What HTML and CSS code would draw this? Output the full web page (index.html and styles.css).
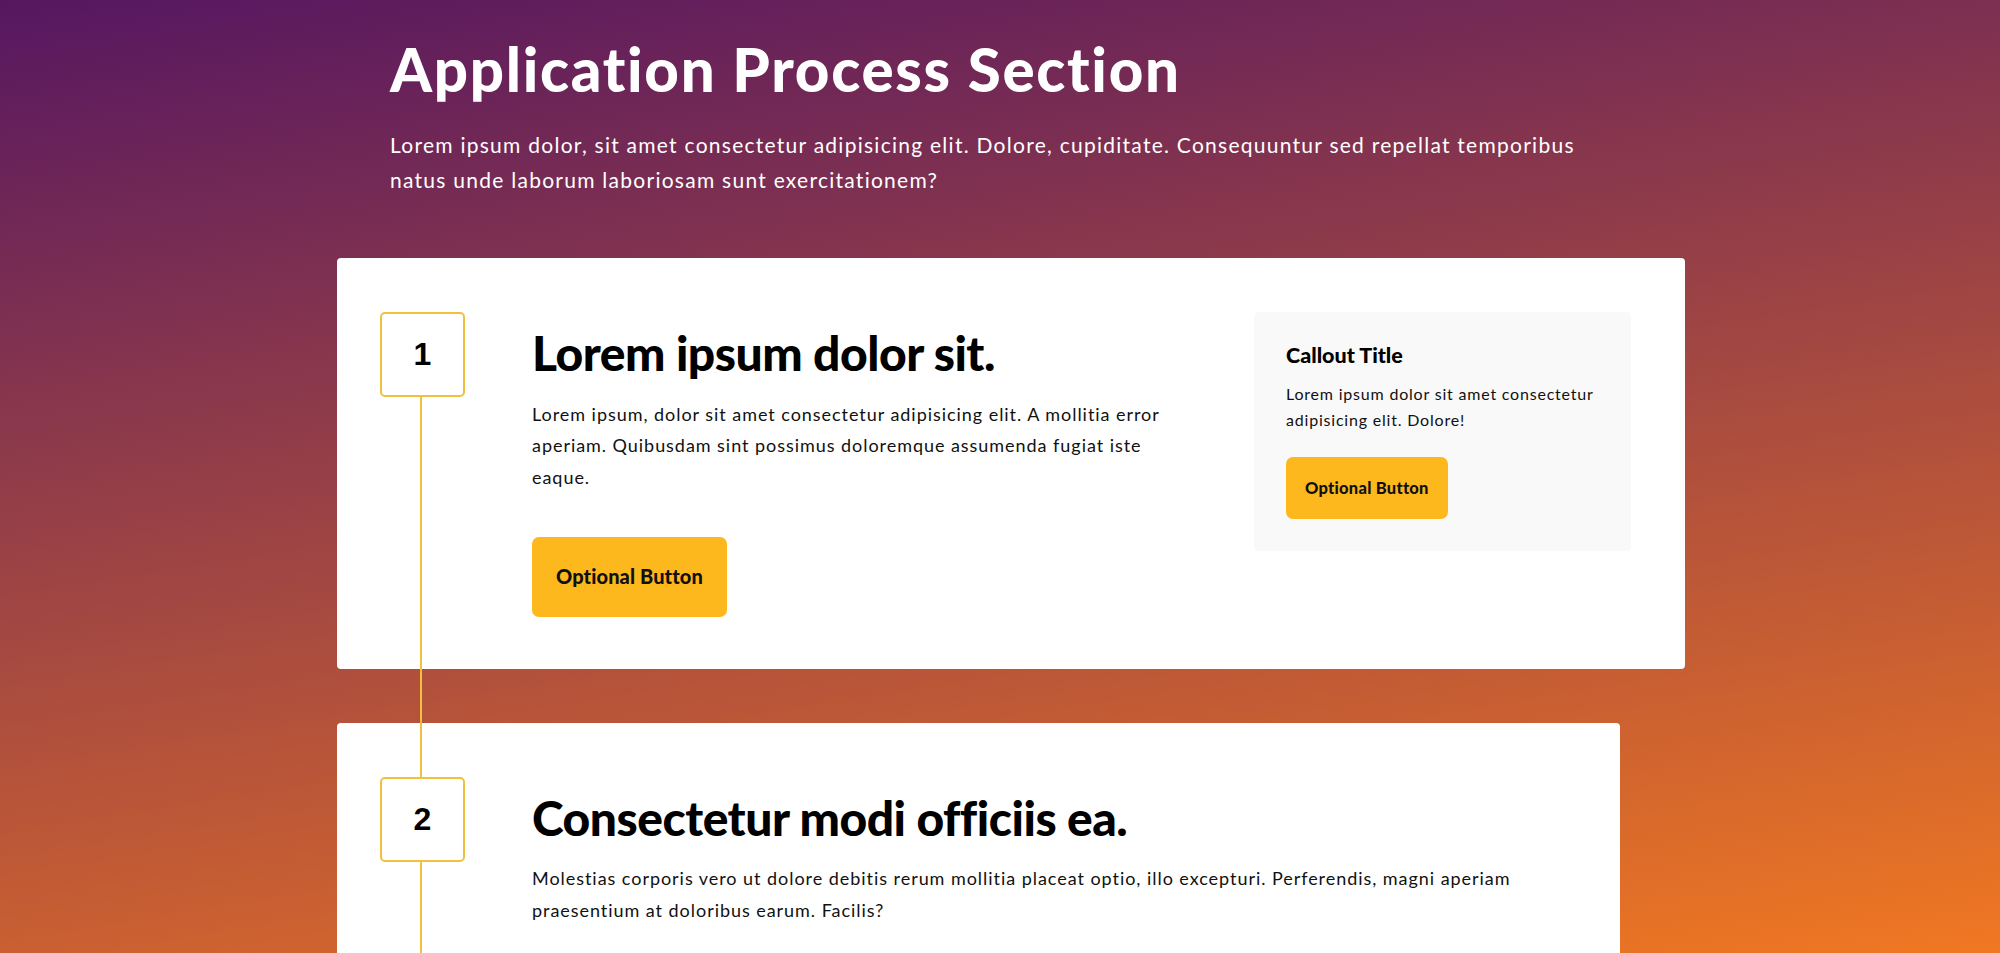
FILE: index.html
```html
<!DOCTYPE html>
<html lang="en">
<head>
<meta charset="utf-8">
<title>Application Process Section</title>
<link rel="stylesheet" href="styles.css">
</head>
<body>
<main class="section">
  <header class="intro">
    <h1 class="intro-title">Application Process Section</h1>
    <p class="intro-text">Lorem ipsum dolor, sit amet consectetur adipisicing elit. Dolore, cupiditate. Consequuntur sed repellat temporibus natus unde laborum laboriosam sunt exercitationem?</p>
  </header>

  <div class="timeline">
    <article class="step step-wide">
      <div class="step-num">1</div>
      <div class="step-body">
        <h2 class="step-title">Lorem ipsum dolor sit.</h2>
        <p class="step-text">Lorem ipsum, dolor sit amet consectetur adipisicing elit. A mollitia error aperiam. Quibusdam sint possimus doloremque assumenda fugiat iste eaque.</p>
        <a class="btn" href="#">Optional Button</a>
      </div>
      <aside class="callout">
        <h3 class="callout-title">Callout Title</h3>
        <p class="callout-text">Lorem ipsum dolor sit amet consectetur adipisicing elit. Dolore!</p>
        <a class="btn btn-small" href="#">Optional Button</a>
      </aside>
    </article>

    <article class="step step-narrow">
      <div class="step-num">2</div>
      <div class="step-body">
        <h2 class="step-title">Consectetur modi officiis ea.</h2>
        <p class="step-text">Molestias corporis vero ut dolore debitis rerum mollitia placeat optio, illo excepturi. Perferendis, magni aperiam praesentium at doloribus earum. Facilis?</p>
      </div>
    </article>
  </div>
</main>
</body>
</html>
```

FILE: styles.css
```css
html {
  background: linear-gradient(171deg, #561761 0%, #f07822 100%) fixed;
  min-height: 100%;
}

body {
  margin: 0;
  font-family: Lato, "Open Sans", sans-serif;
  color: #111;
}

.section {
  padding: 33px 0 80px 337px;
}

.intro {
  padding-left: 53px;
  max-width: 1230px;
}

.intro-title {
  margin: 0;
  font-size: 60px;
  line-height: 72px;
  font-weight: 900;
  letter-spacing: 1.7px;
  color: #fff;
}

.intro-text {
  margin: 22px 0 0;
  font-size: 21px;
  line-height: 35px;
  letter-spacing: 0.06em;
  color: #fff;
}

.timeline {
  position: relative;
  margin-top: 61px;
  display: flex;
  flex-direction: column;
  gap: 54px;
}

.timeline::before {
  content: "";
  position: absolute;
  left: 83px;
  top: 96px;
  bottom: 0;
  width: 2px;
  background: #f3bf3f;
  z-index: 1;
}

.step {
  display: flex;
  align-items: flex-start;
  background: #fff;
  border-radius: 4px;
  padding: 54px 54px 52px 43px;
  box-sizing: border-box;
}

.step-wide {
  width: 1348px;
}

.step-narrow {
  width: 1283px;
}

.step-num {
  position: relative;
  z-index: 2;
  flex: 0 0 auto;
  width: 85px;
  height: 85px;
  box-sizing: border-box;
  border: 2px solid #f3bf3f;
  border-radius: 5px;
  background: #fff;
  display: flex;
  align-items: center;
  justify-content: center;
  font-family: "Liberation Sans", Arial, sans-serif;
  font-weight: 700;
  font-size: 32px;
  color: #000;
}

.step-body {
  flex: 1 1 auto;
  margin-left: 67px;
}

.step-wide .step-body {
  max-width: 640px;
}

.step-title {
  margin: 12px 0 0;
  font-size: 48px;
  line-height: 57.6px;
  font-weight: 900;
  letter-spacing: -0.5px;
  color: #000;
}

.step-text {
  margin: 17px 0 0;
  font-size: 18px;
  line-height: 31.5px;
  letter-spacing: 0.053em;
  color: #111;
}

.btn {
  display: inline-block;
  margin-top: 44px;
  padding: 24px 24px;
  font-size: 20px;
  line-height: 31.5px;
  font-weight: 900;
  letter-spacing: 0.1px;
  color: #111;
  background: #fdb81e;
  border-radius: 7px;
  text-decoration: none;
}

.callout {
  flex: 0 0 auto;
  width: 377px;
  box-sizing: border-box;
  margin-left: auto;
  padding: 31px 32px 32px;
  background: #f9f9f9;
  border-radius: 5px;
}

.callout-title {
  margin: 0;
  font-size: 21.5px;
  line-height: 24px;
  font-weight: 900;
  color: #000;
}

.callout-text {
  margin: 14px 0 0;
  font-size: 16px;
  line-height: 26px;
  letter-spacing: 0.05em;
  color: #111;
}

.btn-small {
  margin-top: 24px;
  padding: 19px 19px;
  font-size: 16.5px;
  line-height: 24px;
  letter-spacing: 0.25px;
}
```
